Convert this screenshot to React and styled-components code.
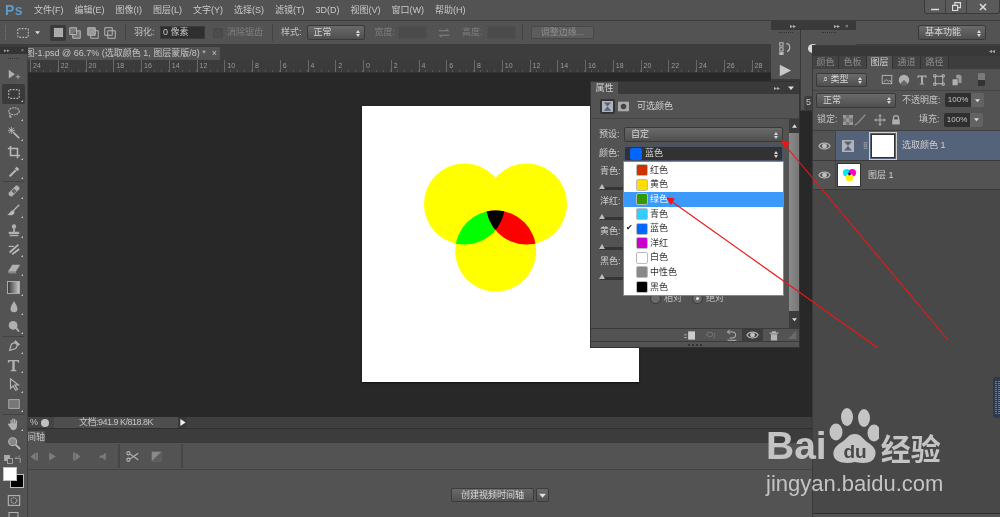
import styled, { createGlobalStyle } from 'styled-components'

const FONT = '"Liberation Sans", "Noto Sans CJK SC", sans-serif'

const GlobalStyle = createGlobalStyle`
	html, body {
		margin: 0;
		padding: 0;
		background: #282828;
	}
	* {
		box-sizing: border-box;
	}
`

const Page = styled.div`
	position: relative;
	width: 1000px;
	height: 517px;
	overflow: hidden;
	display: flex;
	flex-direction: column;
	background: #535353;
	color: #c4c4c4;
	font: 9px/1 ${FONT};
	filter: blur(0.4px);
`

/* top menu */
const MenuBar = styled.div`
	height: 20px;
	flex: none;
	display: flex;
	align-items: center;
	padding-left: 5px;
	background: #535353;
`
const Logo = styled.div`
	width: 29px;
	font: bold 14px/1 ${FONT};
	color: #5d9bc9;
	letter-spacing: 0.5px;
`
const MenuItem = styled.span`
	margin-right: 11px;
	white-space: nowrap;
	color: #c8c8c8;
`
const WindowButtons = styled.div`
	margin-left: auto;
	align-self: flex-start;
	width: 76px;
	height: 14px;
	display: flex;
	border: 1px solid #3a3a3a;
	border-top: 0;
	border-radius: 0 0 3px 3px;
	background: #5a5a5a;
`
const WindowButton = styled.div`
	flex: ${(p) => p.$grow || 1};
	display: flex;
	align-items: center;
	justify-content: center;
	border-right: 1px solid #3f3f3f;
	&:last-child {
		border-right: 0;
	}
`

/* options bar */
const OptionsBar = styled.div`
	height: 25px;
	flex: none;
	display: flex;
	align-items: center;
	padding-left: 5px;
	border-top: 1px solid #3c3c3c;
	border-bottom: 1px solid #3c3c3c;
	background: #535353;
`
const Grip = styled.div`
	width: 2px;
	height: 15px;
	border-left: 1px dotted #777;
`
const OptionSep = styled.div`
	width: 1px;
	height: 17px;
	margin-left: ${(p) => p.$ml}px;
	background: #424242;
`
const OptionIcon = styled.div`
	flex: none;
	width: ${(p) => p.$w || 16}px;
	height: 16px;
	margin-left: ${(p) => p.$ml || 0}px;
	display: flex;
	align-items: center;
	justify-content: center;
	border-radius: 2px;
	background: ${(p) => (p.$active ? '#3a3a3a' : 'transparent')};
`
const OptionLabel = styled.span`
	margin-left: ${(p) => p.$ml}px;
	white-space: nowrap;
	color: ${(p) => (p.$dim ? '#7f7f7f' : '#c4c4c4')};
`
const TextInput = styled.div`
	flex: none;
	width: ${(p) => p.$w}px;
	height: 13px;
	margin-left: ${(p) => p.$ml}px;
	padding-left: 3px;
	display: flex;
	align-items: center;
	white-space: nowrap;
	border-radius: 1px;
	background: ${(p) => (p.$off ? '#4b4b4b' : '#2f2f2f')};
	box-shadow: inset 0 0 0 1px ${(p) => (p.$off ? '#4f4f4f' : '#3a3a3a')};
`
const CheckBox = styled.div`
	flex: none;
	width: 10px;
	height: 10px;
	margin-left: ${(p) => p.$ml}px;
	border: 1px solid #474747;
	border-radius: 2px;
	background: #4c4c4c;
`
const SelectBox = styled.div`
	position: relative;
	flex: none;
	width: ${(p) => p.$w}px;
	height: ${(p) => p.$h || 15}px;
	margin-left: ${(p) => p.$ml || 0}px;
	padding-left: ${(p) => p.$pl || 6}px;
	display: flex;
	align-items: center;
	gap: 3px;
	white-space: nowrap;
	border: 1px solid ${(p) => (p.$dark ? '#45536b' : '#393939')};
	border-radius: 2px;
	background: ${(p) =>
		p.$dark ? '#323232' : 'linear-gradient(#6a6a6a, #4f4f4f)'};
	color: #d6d6d6;
	&::after {
		content: '';
		position: absolute;
		right: 4px;
		top: 50%;
		width: 0;
		height: 0;
		margin-top: -5px;
		border: 2px solid transparent;
		border-bottom: 3px solid #d8d8d8;
	}
	&::before {
		content: '';
		position: absolute;
		right: 4px;
		top: 50%;
		width: 0;
		height: 0;
		margin-top: 1px;
		border: 2px solid transparent;
		border-top: 3px solid #d8d8d8;
	}
`
const RefineButton = styled.div`
	flex: none;
	width: 63px;
	height: 13px;
	margin-left: ${(p) => p.$ml}px;
	display: flex;
	align-items: center;
	justify-content: center;
	border: 1px solid #484848;
	border-radius: 2px;
	background: #5c5c5c;
	color: #8e8e8e;
`

/* workspace */
const Workspace = styled.div`
	flex: 1;
	min-height: 0;
	display: flex;
`
const ToolPanel = styled.div`
	width: 28px;
	flex: none;
	padding-top: 2px;
	background: #3c3c3c;
`
const ToolHead = styled.div`
	height: 7px;
	padding: 0 4px;
	display: flex;
	align-items: center;
	justify-content: space-between;
	background: #343434;
	font-size: 5px;
	color: #aaa;
`
const ToolBody = styled.div`
	height: 470px;
	padding: 4px 1px 0;
	background: #535353;
	border-right: 1px solid #404040;
`
const ToolGrip = styled.div`
	height: 1px;
	margin: 0 7px 6px;
	border-top: 1px dotted #333;
`
const ToolButton = styled.div`
	position: relative;
	height: 19.4px;
	margin: 0 1px;
	display: flex;
	align-items: center;
	justify-content: center;
	border-radius: 2px;
	background: ${(p) => (p.$active ? '#3a3a3a' : 'transparent')};
	box-shadow: ${(p) => (p.$sep ? '0 1px 0 #424242' : 'none')};
	&::after {
		content: '';
		display: ${(p) => (p.$corner ? 'block' : 'none')};
		position: absolute;
		right: 2px;
		bottom: 2px;
		border: 1px solid transparent;
		border-right-color: #c8c8c8;
		border-bottom-color: #c8c8c8;
	}
`
const SwapRow = styled.div`
	height: 13px;
	padding: 0 3px;
	display: flex;
	align-items: center;
	justify-content: space-between;
`
const ColorStack = styled.div`
	position: relative;
	width: 22px;
	height: 21px;
	margin: 1px 0 0 2px;
`
const ColorChip = styled.div`
	position: absolute;
	width: 14px;
	height: 14px;
	border: 1px solid #c0c0c0;
	background: ${(p) => p.$color};
	${(p) => (p.$front ? 'left: 0; top: 0; z-index: 1;' : 'right: 1px; bottom: 0;')}
`
const ModeIcon = styled.div`
	height: 13px;
	margin-top: ${(p) => p.$mt}px;
	display: flex;
	justify-content: center;
`

const Center = styled.div`
	flex: 1;
	min-width: 0;
	display: flex;
	flex-direction: column;
`
const DocRow = styled.div`
	height: 15px;
	flex: none;
	padding-top: 2px;
	background: #3d3d3d;
`
const DocTab = styled.div`
	width: 192px;
	height: 13px;
	display: flex;
	align-items: center;
	justify-content: flex-end;
	gap: 6px;
	padding-right: 3px;
	overflow: hidden;
	white-space: nowrap;
	background: #535353;
`
const Ruler = styled.div`
	height: 13px;
	flex: none;
	display: flex;
	padding-left: 2px;
	overflow: hidden;
	background: #3b3b3b;
	border-bottom: 1px solid #303030;
`
const RulerCell = styled.div`
	width: 27.75px;
	flex: none;
	padding: 2px 0 0 3px;
	font-size: 7px;
	color: #9c9c9c;
	background:
		linear-gradient(#686868, #686868) 0 0 / 1px 100% no-repeat,
		repeating-linear-gradient(90deg, transparent 0 6px, #565656 6px 7px) 0 100% / 100% 2px no-repeat;
`
const CanvasArea = styled.div`
	flex: 1;
	min-height: 0;
	padding: 33px 0 0 334px;
	background: #282828;
`
const Artboard = styled.div`
	width: 277px;
	height: 276px;
	background: #fff;
	box-shadow: 0 1px 2px #111;
`
const StatusBar = styled.div`
	height: 11px;
	flex: none;
	display: flex;
	align-items: center;
	background: #3f3f3f;
`
const StatusLeft = styled.div`
	width: 26px;
	height: 100%;
	display: flex;
	align-items: center;
	justify-content: flex-end;
	padding-right: 5px;
	gap: 3px;
	background: #444;
`
const StatusInfo = styled.div`
	width: 124px;
	height: 100%;
	display: flex;
	align-items: center;
	justify-content: center;
	letter-spacing: -0.5px;
	background: #4e4e4e;
`
const StatusArrow = styled.div`
	width: 9px;
	height: 100%;
	display: flex;
	align-items: center;
	justify-content: center;
	background: #383838;
`
const TimelineHead = styled.div`
	height: 15px;
	flex: none;
	padding-top: 2px;
	border-top: 1px solid #2f2f2f;
	background: #3c3c3c;
`
const TimelineTab = styled.div`
	width: 17px;
	height: 13px;
	display: flex;
	align-items: center;
	justify-content: flex-end;
	overflow: hidden;
	white-space: nowrap;
	background: #535353;
`
const TimelineBar = styled.div`
	height: 27px;
	flex: none;
	display: flex;
	align-items: center;
	border-bottom: 1px solid #444;
	background: #535353;
`
const TimeIcon = styled.div`
	width: ${(p) => p.$w}px;
	display: flex;
	justify-content: center;
`
const TimeSep = styled.div`
	width: 2px;
	height: 24px;
	margin-left: ${(p) => p.$ml || 0}px;
	background: #464646;
`
const TimelineBody = styled.div`
	height: 47px;
	flex: none;
	padding: 18px 0 0 423px;
	display: flex;
	align-items: flex-start;
	gap: 2px;
	background: #535353;
`
const CreateButton = styled.div`
	width: ${(p) => p.$w}px;
	height: 14px;
	display: flex;
	align-items: center;
	justify-content: center;
	border: 1px solid #3c3c3c;
	border-radius: 2px;
	background: linear-gradient(#6a6a6a, #525252);
	color: #d8d8d8;
`

/* docked layers panel */
const Dock = styled.div`
	position: relative;
	z-index: 2;
	width: 188px;
	flex: none;
	padding-top: 1px;
	display: flex;
	flex-direction: column;
	background: #3d3d3d;
	border-left: 1px solid #3a3a3a;
`
const DockHead = styled.div`
	height: 10px;
	flex: none;
	padding-right: 5px;
	text-align: right;
	font-size: 6px;
	line-height: 10px;
	color: #aaa;
	background: #383838;
`
const Tabs = styled.div`
	height: 13px;
	flex: none;
	display: flex;
	background: #3d3d3d;
`
const Tab = styled.div`
	width: ${(p) => p.$w}px;
	display: flex;
	align-items: center;
	justify-content: center;
	border-right: 1px solid #333;
	background: ${(p) => (p.$active ? '#535353' : '#434343')};
	color: ${(p) => (p.$active ? '#d2d2d2' : '#8c8c8c')};
`
const DockBody = styled.div`
	flex: 1;
	min-height: 0;
	background: #484848;
`
const FilterRow = styled.div`
	height: 22px;
	padding-left: 3px;
	display: flex;
	align-items: center;
	background: #535353;
	border-bottom: 1px solid #454545;
`
const FilterIcon = styled.div`
	flex: none;
	width: ${(p) => p.$w || 12}px;
	margin-left: ${(p) => p.$ml || 0}px;
	display: flex;
	justify-content: center;
`
const FilterSwitch = styled.div`
	width: 7px;
	height: 13px;
	margin-left: 12px;
	border-radius: 1px;
	background: linear-gradient(#7a7a7a 50%, #333 50%);
`
const ControlRow = styled.div`
	height: ${(p) => p.$h}px;
	padding-left: ${(p) => p.$pl || 3}px;
	display: flex;
	align-items: center;
	background: #535353;
	border-bottom: ${(p) => (p.$line ? '1px solid #3f3f3f' : '0')};
`
const NumberBox = styled.div`
	flex: none;
	width: 39px;
	height: 14px;
	margin-left: ${(p) => p.$ml}px;
	display: flex;
	border-radius: 2px;
	overflow: hidden;
	font-size: 8px;
`
const NumberValue = styled.div`
	flex: 1;
	display: flex;
	align-items: center;
	justify-content: center;
	background: #2f2f2f;
`
const NumberArrow = styled.div`
	width: 13px;
	display: flex;
	align-items: center;
	justify-content: center;
	background: #636363;
`
const LayerRow = styled.div`
	height: ${(p) => p.$h}px;
	display: flex;
	align-items: center;
	background: ${(p) => (p.$selected ? '#54627a' : '#535353')};
	border-bottom: 1px solid #3a3a3a;
`
const EyeCell = styled.div`
	flex: none;
	width: 23px;
	height: 100%;
	display: flex;
	align-items: center;
	justify-content: center;
	border-right: 1px solid #444;
	background: #535353;
`
const LayerName = styled.span`
	margin-left: ${(p) => p.$ml}px;
	white-space: nowrap;
	color: #d0d0d0;
`
const Thumb = styled.div`
	position: relative;
	flex: none;
	width: ${(p) => p.$size}px;
	height: ${(p) => p.$size}px;
	margin-left: ${(p) => p.$ml}px;
	display: flex;
	align-items: center;
	justify-content: center;
	background: #fff;
	border: 1px solid #333;
`
const MaskThumb = styled(Thumb)`
	outline: 1px solid #d0d0d0;
	outline-offset: 1px;
`
const DockFooter = styled.div`
	height: 4px;
	flex: none;
	border-top: 1px solid #2e2e2e;
	background: #535353;
`
const Filler = styled.div`
	height: 323px;
`

/* floating panels */
const Floating = styled.div`
	position: absolute;
	left: ${(p) => p.$x}px;
	top: ${(p) => p.$y}px;
	width: ${(p) => p.$w}px;
	height: ${(p) => p.$h}px;
`
const MiniPanel = styled(Floating)`
	display: flex;
	flex-direction: column;
	background: #3a3a3a;
`
const MiniHead = styled.div`
	height: 9px;
	flex: none;
	display: flex;
	align-items: center;
	font-size: 6px;
	color: #b0b0b0;
`
const MiniMark = styled.span`
	margin-left: ${(p) => p.$ml}px;
`
const MiniBody = styled.div`
	flex: 1;
	display: flex;
	gap: 1px;
	align-items: flex-start;
`
const MiniColumn = styled.div`
	width: ${(p) => p.$w}px;
	height: ${(p) => p.$h}px;
	padding-top: 2px;
	display: flex;
	flex-direction: column;
	align-items: center;
	gap: 9px;
	background: #535353;
`
const MiniGrip = styled.div`
	width: 14px;
	border-top: 1px dotted #333;
`
const Circle = styled.div`
	width: 10px;
	height: 10px;
	margin: 2px 0 0 7px;
	align-self: flex-start;
	border-radius: 50%;
	background: #d8d8d8;
`
const MiniCell = styled.div`
	align-self: stretch;
	height: 17px;
	margin: 34px 0 0 3px;
	padding-left: 2px;
	display: flex;
	align-items: center;
	border-radius: 2px 0 0 2px;
	background: #3f3f3f;
`
const PropsPanel = styled(Floating)`
	display: flex;
	flex-direction: column;
	background: #535353;
	box-shadow: 0 0 0 1px #333;
`
const PropsHead = styled.div`
	height: 12px;
	flex: none;
	display: flex;
	align-items: stretch;
	background: #3a3a3a;
`
const PropsTab = styled.div`
	width: 27px;
	display: flex;
	align-items: center;
	justify-content: center;
	background: #535353;
	color: #cfcfcf;
`
const PropsTools = styled.div`
	margin-left: auto;
	padding-right: 5px;
	display: flex;
	align-items: center;
	gap: 8px;
	font-size: 6px;
	color: #b0b0b0;
`
const PropsTitle = styled.div`
	height: 25px;
	flex: none;
	padding-left: 9px;
	display: flex;
	align-items: center;
	border-bottom: 1px solid #454545;
`
const TitleIcon = styled.div`
	width: 15px;
	height: 15px;
	margin-right: 1px;
	display: flex;
	align-items: center;
	justify-content: center;
	border-radius: 2px;
	background: ${(p) => (p.$active ? '#333' : 'transparent')};
`
const PropsMain = styled.div`
	height: 209px;
	flex: none;
	display: flex;
`
const PropsForm = styled.div`
	position: relative;
	flex: 1;
	padding-top: 8px;
`
const FormRow = styled.div`
	height: ${(p) => p.$h}px;
	padding-left: 8px;
	display: flex;
	align-items: flex-start;
`
const FormLabel = styled.span`
	width: ${(p) => p.$w || 25}px;
	padding-top: 3px;
	white-space: nowrap;
	color: #cfcfcf;
`
const Swatch = styled.div`
	width: 12px;
	height: 12px;
	flex: none;
	border: 1px solid ${(p) => p.$border || '#bbb'};
	border-radius: 2px;
	background: ${(p) => p.$color};
`
const SliderGroup = styled.div`
	height: 30px;
	padding: 0 0 0 9px;
`
const SliderLabel = styled.div`
	height: 24px;
	padding-top: 4px;
	color: #cfcfcf;
`
const SliderTrack = styled.div`
	position: relative;
	width: 165px;
	height: 3px;
	background: #353535;
	&::after {
		content: '';
		position: absolute;
		left: -1px;
		top: -3px;
		border: 3px solid transparent;
		border-top: 0;
		border-bottom: 5px solid #bcbcbc;
	}
`
const RadioRow = styled.div`
	position: absolute;
	left: 60px;
	top: 175px;
	display: flex;
	align-items: center;
	color: #c4c4c4;
`
const Radio = styled.div`
	width: 9px;
	height: 9px;
	margin: 0 4px 0 ${(p) => p.$ml || 0}px;
	display: flex;
	align-items: center;
	justify-content: center;
	border-radius: 50%;
	background: #6a6a6a;
	box-shadow: 0 0 0 1px #3e3e3e;
	&::after {
		content: '';
		display: ${(p) => (p.$on ? 'block' : 'none')};
		width: 3px;
		height: 3px;
		border-radius: 50%;
		background: #eee;
	}
`
const DropMenu = styled.div`
	position: absolute;
	left: 33px;
	top: 43px;
	width: 159px;
	height: 133px;
	padding-top: 1px;
	background: #fff;
	box-shadow: 0 0 0 1px #888;
`
const DropItem = styled.div`
	position: relative;
	height: 14.6px;
	padding-left: 12px;
	display: flex;
	align-items: center;
	gap: 2px;
	color: ${(p) => (p.$active ? '#fff' : '#333')};
	background: ${(p) => (p.$active ? '#3b99fc' : 'transparent')};
`
const Tick = styled.span`
	position: absolute;
	left: 2px;
	top: 3px;
	font-size: 8px;
	color: #111;
`
const ScrollBar = styled.div`
	width: 10px;
	flex: none;
	display: flex;
	flex-direction: column;
	align-items: center;
	background: #3b3b3b;
`
const ScrollArrow = styled.div`
	height: ${(p) => p.$h}px;
	width: 100%;
	display: flex;
	align-items: center;
	justify-content: center;
`
const ScrollThumb = styled.div`
	width: 100%;
	height: 178px;
	background: linear-gradient(90deg, #8a8a8a, #777);
`
const PropsFooter = styled.div`
	height: 14px;
	flex: none;
	display: flex;
	align-items: center;
	justify-content: flex-end;
	border-top: 1px solid #3a3a3a;
	border-bottom: 1px solid #3a3a3a;
`
const FooterIcon = styled.div`
	width: ${(p) => p.$w || 21}px;
	height: 100%;
	display: flex;
	align-items: center;
	justify-content: center;
	background: ${(p) => (p.$active ? '#3d3d3d' : 'transparent')};
`
const PropsGrip = styled.div`
	height: 5px;
	flex: none;
	display: flex;
	align-items: center;
	justify-content: center;
	&::after {
		content: '';
		width: 14px;
		border-top: 2px dotted #333;
	}
`
const Overlay = styled.svg`
	position: absolute;
	z-index: 3;
	left: 0;
	top: 0;
	pointer-events: none;
`
const Meter = styled(Floating)`
	z-index: 3;
	display: flex;
	padding: 4px 0 4px 2px;
	gap: 1px;
	background: #2b3a4d;
	border-radius: 3px 0 0 3px;
`
const MeterBar = styled.div`
	width: 2px;
	background: repeating-linear-gradient(#6d8a3c 0 1px, #2b3a4d 1px 2px);
`

/* baidu watermark */
const Watermark = styled(Floating)`
	z-index: 4;
	color: #c4c4c4;
	pointer-events: none;
`
const MarkTop = styled.div`
	height: 60px;
	display: flex;
	align-items: flex-end;
`
const MarkBai = styled.span`
	font: bold 39px/1 ${FONT};
	margin-bottom: 2px;
`
const MarkPaw = styled.svg`
	flex: none;
	margin: 0 1px 0 2px;
`
const MarkJing = styled.span`
	margin: 0 0 5px 1px;
	font: bold 30px/1 "Noto Sans CJK SC", sans-serif;
`
const MarkUrl = styled.div`
	margin-top: 5px;
	font: 22px/1.1 ${FONT};
`

const Svg = ({ w = 14, h = 14, vb = '0 0 16 16', children }) => (
	<svg width={w} height={h} viewBox={vb} fill='none' stroke='#b8b8b8' strokeWidth='1.3'>
		{children}
	</svg>
)
const Solid = ({ w = 14, h = 14, vb = '0 0 16 16', color = '#b0b0b0', children }) => (
	<svg width={w} height={h} viewBox={vb} fill={color} stroke='none'>
		{children}
	</svg>
)

const DashedRect = () => (
	<Svg>
		<rect x='2' y='3' width='12' height='10' rx='1' strokeDasharray='2 1.5' />
	</Svg>
)
const Caret = ({ color = '#ddd', size = 5 }) => (
	<Solid w={size} h={size} vb='0 0 6 6' color={color}>
		<path d='M0 1.5h6L3 5z' />
	</Solid>
)
const Eye = () => (
	<Svg w={13} h={10} vb='0 0 16 12'>
		<path d='M1 6c3-5 11-5 14 0-3 5-11 5-14 0z' />
		<circle cx='8' cy='6' r='2.4' fill='#c4c4c4' />
	</Svg>
)
const AdjustIcon = ({ size = 12 }) => (
	<Solid w={size} h={size} vb='0 0 12 12' color='#aeb4bd'>
		<path d='M0 0h12v12H0z' />
		<path d='M2 1.5h8L6 6l4 4.5H2L6 6z' fill='#5a6270' />
	</Solid>
)

const TOOLS = [
	{ icon: <Solid><path d='M2 2l7 5-7 5z' /><path d='M10 10h5M12.5 7.500v5' stroke='#b0b0b0' /></Solid> },
	{ icon: <DashedRect />, corner: true, active: true },
	{ icon: <Svg><ellipse cx='8' cy='6' rx='6' ry='4' strokeDasharray='2 1' /><path d='M4 10c-2 2 0 4 1 2' /></Svg>, corner: true },
	{ icon: <Svg><path d='M7 7l7 7' strokeWidth='2' /><path d='M5 1v8M1 5h8M2 2l6 6M8 2l-6 6' strokeWidth='1' /></Svg>, corner: true },
	{ icon: <Svg><path d='M4 1v11h11M1 4h11v11' strokeWidth='1.8' /></Svg>, corner: true },
	{ icon: <Svg><path d='M3 13l7-7' strokeWidth='2.4' /><path d='M10 3l3 3' strokeWidth='3' /></Svg>, corner: true, sep: true },
	{ icon: <Solid><path d='M2 10l8-8c2-1 5 2 4 4l-8 8c-3 1-5-2-4-4z' /><path d='M5 8l3 3 3-3-3-3z' fill='#666' /></Solid>, corner: true },
	{ icon: <Svg><path d='M14 2L7 9' strokeWidth='1.6' /><path d='M7 9c-3 0-3 3-5 4 3 1 6 0 6-3z' fill='#b8b8b8' /></Svg>, corner: true },
	{ icon: <Solid><circle cx='8' cy='4' r='2.5' /><path d='M7 6h2v4H7zM2 10h12v2.500H2zM3 13.500h10V15H3z' /></Solid>, corner: true },
	{ icon: <Svg><path d='M3 12L13 3M6 14l8-6' strokeWidth='2' /><path d='M2 5h6' /></Svg>, corner: true },
	{ icon: <Solid><path d='M6 3h9l-5 8H1z' /><path d='M1 11h9l1 2H2z' fill='#888' /></Solid>, corner: true },
	{ icon: <svg width='13' height='13'><defs><linearGradient id='grad'><stop offset='0' stopColor='#333' /><stop offset='1' stopColor='#ccc' /></linearGradient></defs><rect x='.5' y='.5' width='12' height='12' fill='url(#grad)' stroke='#aaa' /></svg>, corner: true },
	{ icon: <Solid><path d='M8 1c2 4 4 6 4 9a4 4 0 0 1-8 0c0-3 2-5 4-9z' /></Solid>, corner: true },
	{ icon: <Solid><circle cx='7' cy='6' r='5' /><path d='M9 9l1.500-1.500 4 5-1.500 1.500z' /></Solid>, corner: true, sep: true },
	{ icon: <Svg><path d='M3 13l2-7 4-2 3 3-2 4z' /><path d='M9 2l5 5' strokeWidth='2' /></Svg>, corner: true },
	{ icon: <Solid w={15} h={15}><path d='M2 2h12v3h-1l-1-1.500H9.300V12.500l1.700.5V14H5v-1l1.700-.5V3.500H4L3 5H2z' /></Solid>, corner: true },
	{ icon: <Svg><path d='M4 1v11l3-3 3 5 2-1-3-5h4z' /></Svg>, corner: true },
	{ icon: <Solid><rect x='2' y='3' width='12' height='10' fill='#777' stroke='#b0b0b0' /></Solid>, corner: true, sep: true },
	{ icon: <Solid><path d='M4 7V3.500a1 1 0 0 1 1.500 0V7h.5V2a1 1 0 0 1 1.500 0v5h.5V2.500a1 1 0 0 1 1.500 0V7h.5V4a1 1 0 0 1 1.500 0v6c0 3-2 5-4 5s-3-1-4-3L1 8.500c0-1 1-1.500 1.500-.5z' /></Solid>, corner: true },
	{ icon: <Svg><circle cx='6.500' cy='6.500' r='4.500' fill='#888' /><path d='M10 10l5 5' strokeWidth='2.200' /></Svg> },
]

const MENUS = ['文件(F)', '编辑(E)', '图像(I)', '图层(L)', '文字(Y)', '选择(S)', '滤镜(T)', '3D(D)', '视图(V)', '窗口(W)', '帮助(H)']
const RULER = [24, 22, 20, 18, 16, 14, 12, 10, 8, 6, 4, 2, 0, 2, 4, 6, 8, 10, 12, 14, 16, 18, 20, 22, 24, 26, 28, 30]
const COLORS = [
	{ name: '红色', color: '#cc3300' },
	{ name: '黄色', color: '#ffdd00' },
	{ name: '绿色', color: '#339900', active: true },
	{ name: '青色', color: '#33ccff' },
	{ name: '蓝色', color: '#0066ff', checked: true },
	{ name: '洋红', color: '#cc00cc' },
	{ name: '白色', color: '#ffffff' },
	{ name: '中性色', color: '#888888' },
	{ name: '黑色', color: '#000000' },
]
const SLIDERS = ['青色:', '洋红:', '黄色:', '黑色:']

const Venn = () => (
	<svg width='277' height='276' viewBox='362 106 277 276'>
		<defs>
			<clipPath id='left'>
				<circle cx='464.5' cy='204' r='40.5' />
			</clipPath>
			<clipPath id='right'>
				<circle cx='526.5' cy='204' r='40.5' />
			</clipPath>
		</defs>
		<circle cx='464.5' cy='204' r='40.5' fill='#ffff00' />
		<circle cx='526.5' cy='204' r='40.5' fill='#ffff00' />
		<circle cx='495.7' cy='251' r='40.5' fill='#ffff00' />
		<circle cx='495.7' cy='251' r='40.5' fill='#00ff00' clipPath='url(#left)' />
		<circle cx='495.7' cy='251' r='40.5' fill='#ff0000' clipPath='url(#right)' />
		<g clipPath='url(#left)'>
			<circle cx='495.7' cy='251' r='40.5' fill='#000' clipPath='url(#right)' />
		</g>
	</svg>
)

const Paw = () => (
	<MarkPaw width='50' height='60' viewBox='0 0 50 60'>
		<g fill='#c4c4c4'>
			<ellipse cx='7' cy='25' rx='6.500' ry='8.500' />
			<ellipse cx='18' cy='10' rx='6' ry='9' />
			<ellipse cx='35' cy='11' rx='6' ry='9' />
			<ellipse cx='45' cy='26' rx='6.500' ry='8.500' />
			<path d='M26 27c6 0 8 5 12 8 7 4 10 9 8 14-2 7-9 8-20 6-9 2-18 1-21-5-2-6 1-11 8-15 5-3 6-8 13-8z' />
		</g>
		<text x='26' y='51' textAnchor='middle' fill='#484848' fontFamily='Liberation Sans' fontWeight='bold' fontSize='19'>du</text>
	</MarkPaw>
)

const App = () => (
	<Page>
		<GlobalStyle />
		<MenuBar>
			<Logo>Ps</Logo>
			{MENUS.map((m) => (
				<MenuItem key={m}>{m}</MenuItem>
			))}
			<WindowButtons>
				<WindowButton $grow={1}>
					<Svg w={8} h={8}><path d='M0 13h16' strokeWidth='3' stroke='#ddd' /></Svg>
				</WindowButton>
				<WindowButton $grow={1}>
					<Svg w={9} h={9}><path d='M1 6h9v9H1zM5 6V1h10v9h-5' stroke='#ddd' strokeWidth='2' /></Svg>
				</WindowButton>
				<WindowButton $grow={1.6}>
					<Svg w={8} h={8}><path d='M2 2l12 12M14 2L2 14' stroke='#ddd' strokeWidth='3' /></Svg>
				</WindowButton>
			</WindowButtons>
		</MenuBar>

		<OptionsBar>
			<Grip />
			<OptionIcon $ml={8}><DashedRect /></OptionIcon>
			<OptionIcon $w={8} $ml={2}><Caret /></OptionIcon>
			<OptionIcon $active $ml={9}>
				<Svg w={11} h={11}><rect x='2' y='2' width='12' height='12' fill='#aaa' /></Svg>
			</OptionIcon>
			<OptionIcon $ml={1}>
				<Svg w={12} h={12}><path d='M1 1h9v9H1zM5 10v5h10V5h-5' fill='#777' /></Svg>
			</OptionIcon>
			<OptionIcon $ml={2}>
				<Svg w={12} h={12}><path d='M1 1h10v10H1z' fill='#999' /><path d='M5 11v4h10V5h-4' /></Svg>
			</OptionIcon>
			<OptionIcon $ml={1}>
				<Svg w={12} h={12}><path d='M1 1h10v10H1zM5 5h10v10H5z' /></Svg>
			</OptionIcon>
			<OptionSep $ml={7} />
			<OptionLabel $ml={8}>羽化:</OptionLabel>
			<TextInput $w={45} $ml={5.5}>0 像素</TextInput>
			<CheckBox $ml={8} />
			<OptionLabel $ml={4} $dim>消除锯齿</OptionLabel>
			<OptionSep $ml={9} />
			<OptionLabel $ml={8}>样式:</OptionLabel>
			<SelectBox $w={58} $ml={5}>正常</SelectBox>
			<OptionLabel $ml={10} $dim>宽度:</OptionLabel>
			<TextInput $w={29} $ml={3} $off />
			<OptionIcon $ml={9}>
				<Svg w={12} h={12}><path d='M1 5h13l-3-3M15 11H2l3 3' stroke='#888' /></Svg>
			</OptionIcon>
			<OptionLabel $ml={10} $dim>高度:</OptionLabel>
			<TextInput $w={29} $ml={4.5} $off />
			<OptionSep $ml={6} />
			<RefineButton $ml={8}>调整边缘...</RefineButton>
			<SelectBox $w={68} $ml={324}>基本功能</SelectBox>
		</OptionsBar>

		<Workspace>
			<ToolPanel>
				<ToolHead>
					<span>▸▸</span>
					<span>×</span>
				</ToolHead>
				<ToolBody>
					<ToolGrip />
					{TOOLS.map((t, i) => (
						<ToolButton key={i} $active={t.active} $corner={t.corner} $sep={t.sep}>
							{t.icon}
						</ToolButton>
					))}
					<SwapRow>
						<Svg w={9} h={9}><rect x='1' y='1' width='9' height='9' fill='#aaa' /><rect x='6' y='6' width='9' height='9' fill='#555' /></Svg>
						<Svg w={9} h={9}><path d='M2 6h9v8M8 3L11 1M2 6l3-3' /></Svg>
					</SwapRow>
					<ColorStack>
						<ColorChip $color='#fff' $front />
						<ColorChip $color='#000' />
					</ColorStack>
					<ModeIcon $mt={6}>
						<Svg w={14} h={13}><rect x='1' y='2' width='14' height='12' /><circle cx='8' cy='8' r='3.500' strokeDasharray='1.500 1' /></Svg>
					</ModeIcon>
					<ModeIcon $mt={4}>
						<Svg w={13} h={12}><rect x='2' y='2' width='12' height='12' /></Svg>
					</ModeIcon>
				</ToolBody>
			</ToolPanel>

			<Center>
				<DocRow>
					<DocTab>
						<span>图-1.psd @ 66.7% (选取颜色 1, 图层蒙版/8) *</span>
						<span>×</span>
					</DocTab>
				</DocRow>
				<Ruler>
					{RULER.map((n, i) => (
						<RulerCell key={i}>{n}</RulerCell>
					))}
				</Ruler>
				<CanvasArea>
					<Artboard>
						<Venn />
					</Artboard>
				</CanvasArea>
				<StatusBar>
					<StatusLeft>
						<span>%</span>
						<Solid w={8} h={8} color='#c0c0c0'><circle cx='8' cy='8' r='8' /></Solid>
					</StatusLeft>
					<StatusInfo>文档:941.9 K/818.8K</StatusInfo>
					<StatusArrow>
						<Solid w={6} h={7} vb='0 0 6 8' color='#eee'><path d='M0 0l6 4-6 4z' /></Solid>
					</StatusArrow>
				</StatusBar>
				<TimelineHead>
					<TimelineTab>时间轴</TimelineTab>
				</TimelineHead>
				<TimelineBar>
					<TimeIcon $w={12}>
						<Solid w={9} h={9} color='#7c7c7c'><path d='M1 8l9-7v14zM11 1h3v14h-3z' /></Solid>
					</TimeIcon>
					<TimeIcon $w={24}>
						<Solid w={9} h={9} color='#7c7c7c'><path d='M2 1l12 7-12 7z' /></Solid>
					</TimeIcon>
					<TimeIcon $w={24}>
						<Solid w={9} h={9} color='#7c7c7c'><path d='M2 1h3v14H2zM6 1l9 7-9 7z' /></Solid>
					</TimeIcon>
					<TimeIcon $w={30}>
						<Solid w={9} h={9} color='#7c7c7c'><path d='M1 6h5l6-5v14l-6-5H1z' /></Solid>
					</TimeIcon>
					<TimeSep />
					<TimeIcon $w={24}>
						<Svg w={13} h={13}><circle cx='3' cy='4' r='2' /><circle cx='3' cy='12' r='2' /><path d='M5 5l10 7M5 11l10-7' /></Svg>
					</TimeIcon>
					<TimeIcon $w={24}>
						<Solid w={11} h={11} color='#8a8a8a'><path d='M1 1h14v14H1z' /><path d='M15 1v14H1z' fill='#5c5c5c' /></Solid>
					</TimeIcon>
					<TimeSep $ml={13} />
				</TimelineBar>
				<TimelineBody>
					<CreateButton $w={83}>创建视频时间轴</CreateButton>
					<CreateButton $w={13}><Caret size={7} /></CreateButton>
				</TimelineBody>
			</Center>

			<Dock>
				<DockHead>◂◂</DockHead>
				<Tabs>
					<Tab $w={26}>颜色</Tab>
					<Tab $w={28}>色板</Tab>
					<Tab $w={26} $active>图层</Tab>
					<Tab $w={28}>通道</Tab>
					<Tab $w={28}>路径</Tab>
				</Tabs>
				<DockBody>
					<FilterRow>
						<SelectBox $w={51} $h={14}>⌕ 类型</SelectBox>
						<FilterIcon $w={17.5} $ml={11}>
							<Svg w={12} h={11}><rect x='1' y='2' width='14' height='12' /><path d='M3 12l4-4 3 3 2-2 2 3' /></Svg>
						</FilterIcon>
						<FilterIcon $w={17.5}>
							<Solid w={12} h={12}><circle cx='8' cy='8' r='7' /><path d='M8 8l5 5A7 7 0 0 1 3 13z' fill='#666' /></Solid>
						</FilterIcon>
						<FilterIcon $w={17.5}>
							<Solid w={12} h={12}><path d='M2 2h12v3h-1l-1-1.500H9.300V12.500l1.700.5V14H5v-1l1.700-.5V3.500H4L3 5H2z' /></Solid>
						</FilterIcon>
						<FilterIcon $w={17.5}>
							<Svg w={12} h={12}><rect x='3' y='3' width='10' height='10' /><path d='M1 1h3v3H1zM12 1h3v3h-3zM1 12h3v3H1zM12 12h3v3h-3z' /></Svg>
						</FilterIcon>
						<FilterIcon $w={17.5}>
							<Solid w={12} h={12}><path d='M2 7h7v8H2z' /><path d='M7 1h5l2 2v9h-4V6H7z' fill='#999' /></Solid>
						</FilterIcon>
						<FilterSwitch />
					</FilterRow>
					<ControlRow $h={18}>
						<SelectBox $w={80}>正常</SelectBox>
						<OptionLabel $ml={6}>不透明度:</OptionLabel>
						<NumberBox $ml={4.5}>
							<NumberValue>100%</NumberValue>
							<NumberArrow><Caret /></NumberArrow>
						</NumberBox>
					</ControlRow>
					<ControlRow $h={22} $pl={4} $line>
						<OptionLabel $ml={0}>锁定:</OptionLabel>
						<FilterIcon $ml={4.5}>
							<Solid w={10} h={10} color='#777'><path d='M0 0h16v16H0z' /><path d='M0 0h5v5H0zM10 0h6v5h-6zM5 5h5v6H5zM0 11h5v5H0zM10 11h6v5h-6z' fill='#999' /></Solid>
						</FilterIcon>
						<FilterIcon>
							<Svg w={12} h={12}><path d='M1 15l5-4 9-10' stroke='#8a8a8a' strokeWidth='2' /></Svg>
						</FilterIcon>
						<FilterIcon $ml={8}>
							<Svg w={12} h={12}><path d='M8 1v14M1 8h14M6 3l2-2 2 2M6 13l2 2 2-2M3 6L1 8l2 2M13 6l2 2-2 2' /></Svg>
						</FilterIcon>
						<FilterIcon $ml={4}>
							<Solid w={10} h={12}><path d='M3 7V5a5 5 0 0 1 10 0v2h1v8H2V7zM5 7h6V5a3 3 0 0 0-6 0z' /></Solid>
						</FilterIcon>
						<OptionLabel $ml={17}>填充:</OptionLabel>
						<NumberBox $ml={4.5}>
							<NumberValue>100%</NumberValue>
							<NumberArrow><Caret /></NumberArrow>
						</NumberBox>
					</ControlRow>
					<LayerRow $h={30} $selected>
						<EyeCell><Eye /></EyeCell>
						<OptionIcon $ml={4}><AdjustIcon /></OptionIcon>
						<OptionIcon $w={8} $ml={5}>
							<Svg w={7} h={11}><path d='M5 1h6v6H5zM5 9h6v6H5z' /></Svg>
						</OptionIcon>
						<MaskThumb $size={24} $ml={2} />
						<LayerName $ml={7}>选取颜色 1</LayerName>
					</LayerRow>
					<LayerRow $h={29}>
						<EyeCell><Eye /></EyeCell>
						<Thumb $size={24} $ml={1}>
							<svg width='15' height='15' viewBox='0 0 16 16'>
								<circle cx='5' cy='5' r='4' fill='#00e5ff' />
								<circle cx='11' cy='5' r='4' fill='#ff00c8' />
								<circle cx='8' cy='10' r='4' fill='#ffee00' />
								<circle cx='8' cy='6.500' r='1.500' fill='#1a1a60' />
							</svg>
						</Thumb>
						<LayerName $ml={7}>图层 1</LayerName>
					</LayerRow>
					<Filler />
					<DockFooter />
				</DockBody>
			</Dock>
		</Workspace>

		<MiniPanel $x={771} $y={21} $w={85} $h={90}>
			<MiniHead>
				<MiniMark $ml={19}>▸▸</MiniMark>
				<MiniMark $ml={38}>▸▸</MiniMark>
				<MiniMark $ml={5}>×</MiniMark>
			</MiniHead>
			<MiniBody>
				<MiniColumn $w={29} $h={49}>
					<MiniGrip />
					<Svg w={13} h={13}><path d='M1 1h4v4H1zM1 7h4v4H1z' /><rect x='1' y='13' width='4' height='3' fill='#b8b8b8' /><path d='M9 2c5 0 6 7 1 10' /></Svg>
					<Solid w={13} h={13} color='#c8c8c8'><path d='M1 1l14 7-14 7z' /></Solid>
				</MiniColumn>
				<MiniColumn $w={55} $h={80}>
					<MiniGrip />
					<Circle />
					<MiniCell>5</MiniCell>
				</MiniColumn>
			</MiniBody>
		</MiniPanel>

		<PropsPanel $x={591} $y={82} $w={208} $h={265}>
			<PropsHead>
				<PropsTab>属性</PropsTab>
				<PropsTools>
					<span>▸▸</span>
					<Caret size={6} />
				</PropsTools>
			</PropsHead>
			<PropsTitle>
				<TitleIcon $active><AdjustIcon size={11} /></TitleIcon>
				<TitleIcon>
					<Solid w={13} h={11} color='#aaa'><path d='M0 1h16v14H0z' /><circle cx='8' cy='8' r='4' fill='#444' /></Solid>
				</TitleIcon>
				<LayerName $ml={5}>可选颜色</LayerName>
			</PropsTitle>
			<PropsMain>
				<PropsForm>
					<FormRow $h={19}>
						<FormLabel>预设:</FormLabel>
						<SelectBox $w={159}>自定</SelectBox>
					</FormRow>
					<FormRow $h={17}>
						<FormLabel>颜色:</FormLabel>
						<SelectBox $w={159} $dark $pl={5}>
							<Swatch $color='#0066ff' $border='#0066ff' />
							蓝色
						</SelectBox>
					</FormRow>
					{SLIDERS.map((s) => (
						<SliderGroup key={s}>
							<SliderLabel>{s}</SliderLabel>
							<SliderTrack />
						</SliderGroup>
					))}
					<RadioRow>
						<Radio />
						相对
						<Radio $ml={11} $on />
						绝对
					</RadioRow>
					<DropMenu>
						{COLORS.map((c) => (
							<DropItem key={c.name} $active={c.active}>
								{c.checked && <Tick>✔</Tick>}
								<Swatch $color={c.color} />
								{c.name}
							</DropItem>
						))}
					</DropMenu>
				</PropsForm>
				<ScrollBar>
					<ScrollArrow $h={14}>
						<Solid w={5} h={4} vb='0 0 6 4' color='#ddd'><path d='M3 0l3 4H0z' /></Solid>
					</ScrollArrow>
					<ScrollThumb />
					<ScrollArrow $h={17}>
						<Caret size={5} />
					</ScrollArrow>
				</ScrollBar>
			</PropsMain>
			<PropsFooter>
				<FooterIcon>
					<Solid w={13} h={11} color='#ccc'><path d='M6 2h10v12H6z' /><path d='M0 7h4M0 11h4' stroke='#ccc' /></Solid>
				</FooterIcon>
				<FooterIcon>
					<Svg w={14} h={10}><ellipse cx='6' cy='7' rx='5' ry='3.500' stroke='#7c7c7c' /><path d='M13 5c2 3 1 6-2 8' stroke='#7c7c7c' /></Svg>
				</FooterIcon>
				<FooterIcon>
					<Svg w={12} h={12}><path d='M5 1L2 4l3 3M2 4h7a4 4 0 0 1 0 8H5M2 15h12' /></Svg>
				</FooterIcon>
				<FooterIcon $active><Eye /></FooterIcon>
				<FooterIcon>
					<Solid w={10} h={11} color='#b5b5b5'><path d='M1 3h14v2H1zM5 1h6v2H5zM3 6h10v10H3z' /></Solid>
				</FooterIcon>
				<FooterIcon $w={15}>
					<Solid w={8} h={8} color='#6a6a6a'><path d='M16 0v16H0z' /></Solid>
				</FooterIcon>
			</PropsFooter>
			<PropsGrip />
		</PropsPanel>

		<Meter $x={993} $y={377} $w={7} $h={41}>
			<MeterBar />
			<MeterBar />
		</Meter>

		<Overlay width='1000' height='517' viewBox='0 0 1000 517'>
			<g stroke='#f01414' strokeWidth='1.1' fill='#f01414'>
				<path d='M948 340L785 145' />
				<path d='M878 348L671 201' />
				<path d='M782 141l7 2-4 4z' />
				<path d='M667 198l7 1-3 5z' />
			</g>
		</Overlay>

		<Watermark $x={766} $y={407} $w={200} $h={95}>
			<MarkTop>
				<MarkBai>Bai</MarkBai>
				<Paw />
				<MarkJing>经验</MarkJing>
			</MarkTop>
			<MarkUrl>jingyan.baidu.com</MarkUrl>
		</Watermark>
	</Page>
)

export default App
